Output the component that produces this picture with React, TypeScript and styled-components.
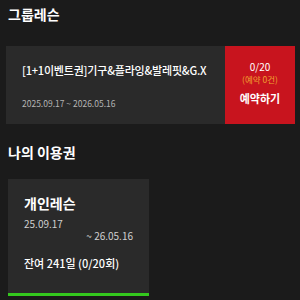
import styled, { createGlobalStyle } from "styled-components";

const GlobalStyle = createGlobalStyle`
    html, body {
        margin: 0;
        padding: 0;
        background-color: #1b1b1b;
        font-family: "Noto Sans CJK KR", "Noto Sans", sans-serif;
        color: #ffffff;
    }
`;

const Page = styled.div`
    display: flex;
    flex-direction: column;
    width: 300px;
    height: 300px;
    overflow: hidden;
    padding: 4px 5px 0 6px;
    box-sizing: border-box;
`;

const SectionTitle = styled.h2<{gap: number}>`
    margin: 0 0 ${(props) => props.gap}px 2px;
    font-size: 14px;
    font-weight: 700;
    line-height: 20px;
`;

const GroupCard = styled.div`
    display: flex;
    height: 78px;
    margin-top: 1px;
    background-color: #2a2a2a;
    margin-bottom: 18px;
`;

const GroupInfo = styled.div`
    flex: 1;
    display: flex;
    flex-direction: column;
    justify-content: space-between;
    padding: 16px 0 15px 16px;
`;

const GroupName = styled.div`
    font-size: 11px;
    font-weight: 500;
    line-height: 16px;
    letter-spacing: -0.2px;
    white-space: nowrap;
`;

const DateText = styled.div`
    font-size: 8.5px;
    color: #b4b4b4;
    line-height: 12px;
`;

const ReserveBox = styled.div`
    width: 70px;
    background-color: #c8141e;
    display: flex;
    flex-direction: column;
    align-items: center;
    padding-top: 15px;
    box-sizing: border-box;
`;

const Count = styled.div`
    font-size: 10px;
    line-height: 12px;
`;

const Booked = styled.div`
    margin-top: 1px;
    font-size: 8.5px;
    line-height: 11px;
    color: #f0a030;
`;

const ReserveButton = styled.div`
    margin-top: 6px;
    font-size: 11px;
    font-weight: 700;
    line-height: 14px;
`;

const PassCard = styled.div`
    width: 141px;
    height: 117px;
    margin-left: 2px;
    background-color: #2a2a2a;
    border-bottom: 3px solid #34c81e;
    box-sizing: border-box;
    display: flex;
    flex-direction: column;
    padding: 14px 16px 0 16px;
`;

const PassName = styled.div`
    font-size: 14px;
    font-weight: 700;
    line-height: 20px;
    margin-bottom: 5px;
`;

const PassDate = styled.div<{right?: boolean}>`
    font-size: 10px;
    color: #d0d0d0;
    line-height: 12px;
    text-align: ${(props) => (props.right ? "right" : "left")};
`;

const Remain = styled.div`
    margin-top: 13px;
    font-size: 11px;
    font-weight: 500;
    line-height: 16px;
    white-space: nowrap;
`;

export default function App() {
    return (
        <>
            <GlobalStyle />
            <Page>
                <SectionTitle gap={21}>그룹레슨</SectionTitle>
                <GroupCard>
                    <GroupInfo>
                        <GroupName>[1+1이벤트권]기구&플라잉&발레핏&G.X</GroupName>
                        <DateText>2025.09.17 ~ 2026.05.16</DateText>
                    </GroupInfo>
                    <ReserveBox>
                        <Count>0/20</Count>
                        <Booked>(예약 0건)</Booked>
                        <ReserveButton>예약하기</ReserveButton>
                    </ReserveBox>
                </GroupCard>
                <SectionTitle gap={17}>나의 이용권</SectionTitle>
                <PassCard>
                    <PassName>개인레슨</PassName>
                    <PassDate>25.09.17</PassDate>
                    <PassDate right>~ 26.05.16</PassDate>
                    <Remain>잔여 241일 (0/20회)</Remain>
                </PassCard>
            </Page>
        </>
    );
}
